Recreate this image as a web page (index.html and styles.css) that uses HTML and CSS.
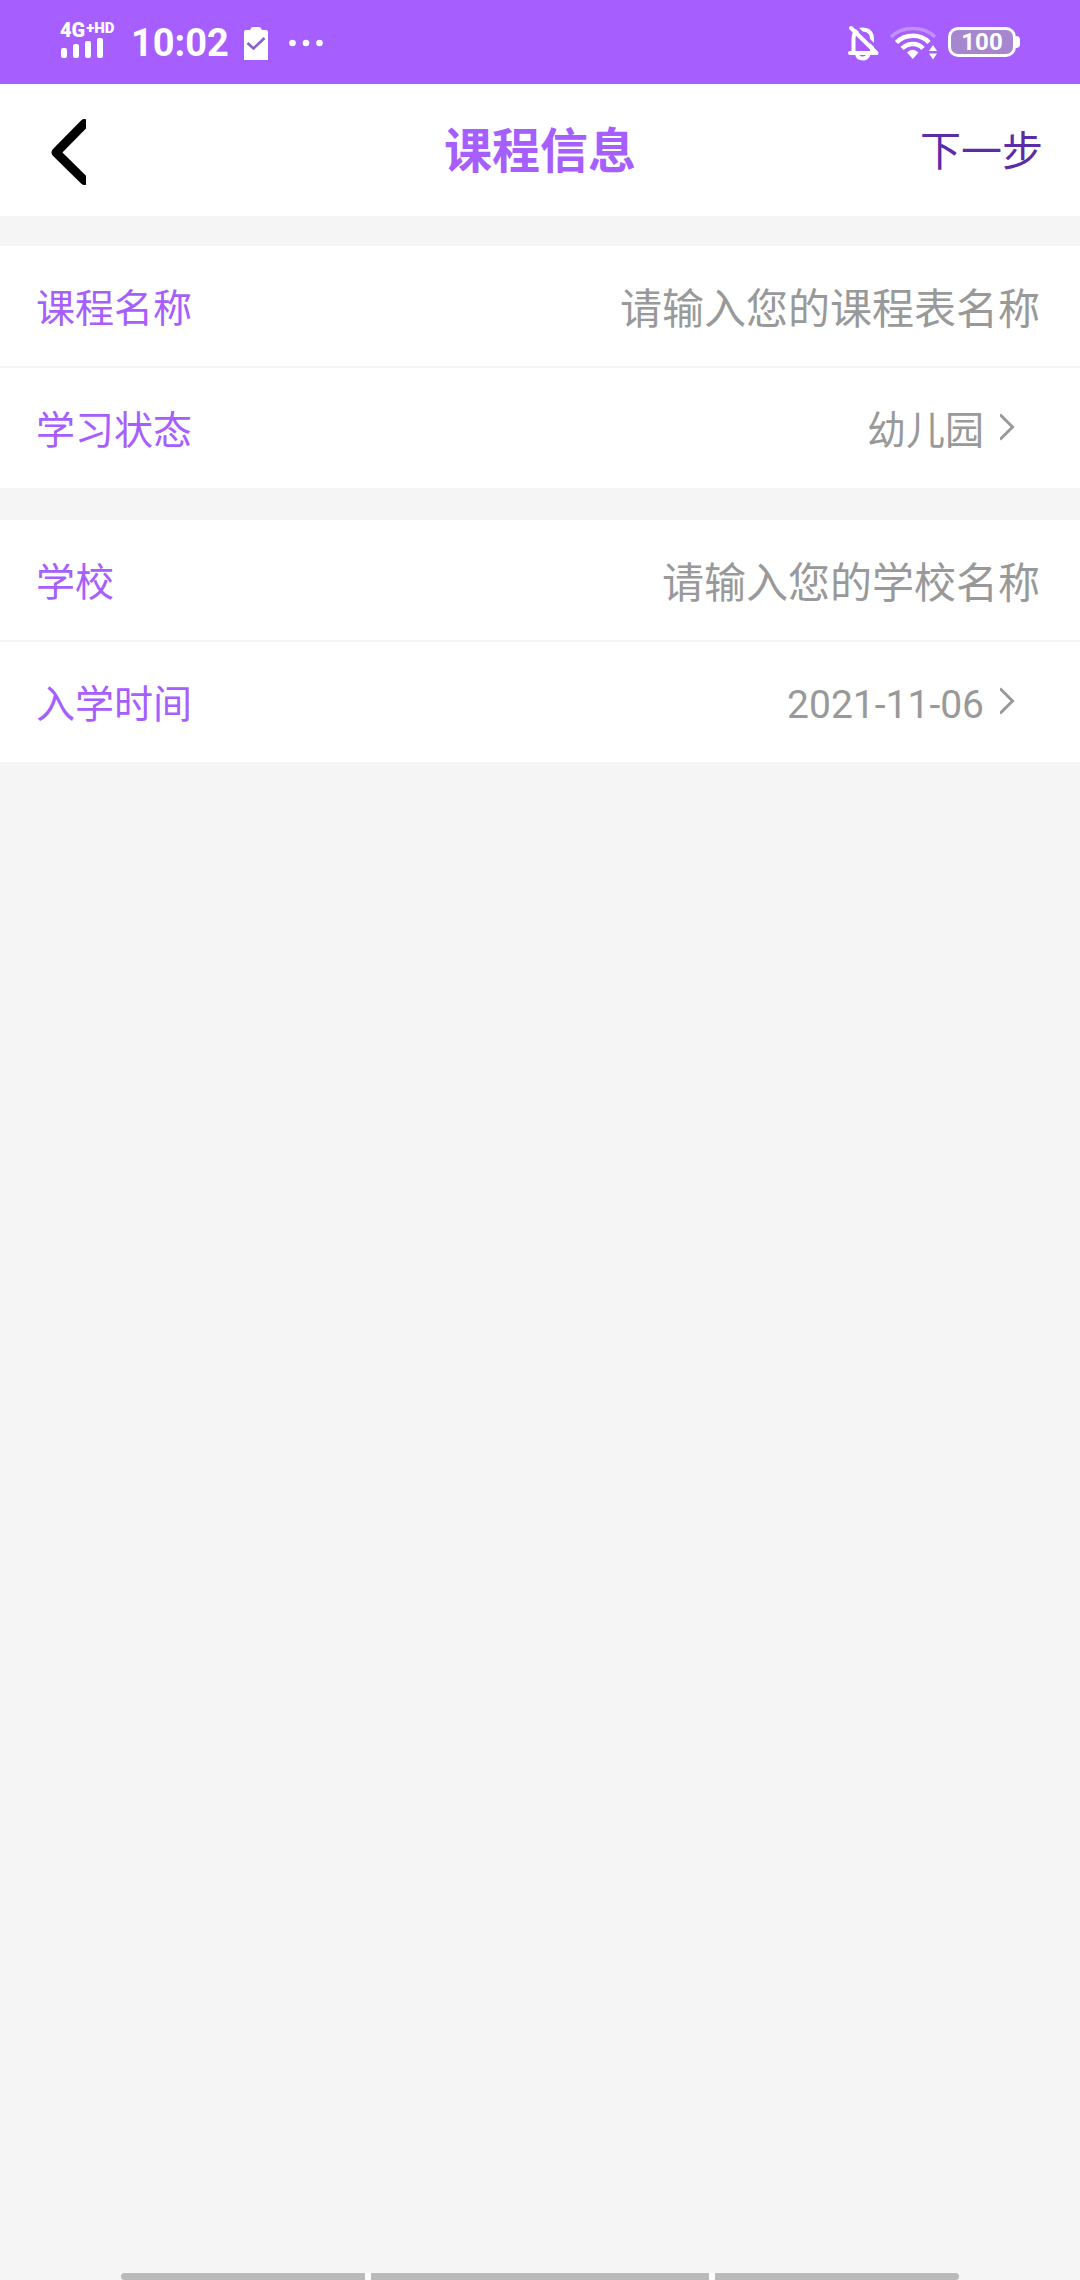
FILE: index.html
```html
<!DOCTYPE html>
<html lang="zh-CN">
<head>
<meta charset="utf-8">
<meta name="viewport" content="width=device-width, initial-scale=1">
<title>课程信息</title>
<link rel="stylesheet" href="styles.css">
</head>
<body>
<div class="status-bar">
  <div class="status-group">
    <div class="signal">
      <div class="network"><span>4G</span><span class="network-small">+HD</span></div>
      <svg class="signal-bars" width="44" height="20" viewBox="0 0 44 20" aria-hidden="true">
        <rect x="0" y="10" width="6" height="10" rx="2"/>
        <rect x="12" y="6" width="6" height="14" rx="2"/>
        <rect x="24" y="3" width="6" height="17" rx="2"/>
        <rect x="36" y="0" width="6" height="20" rx="2"/>
      </svg>
    </div>
    <span class="clock">10:02</span>
    <svg class="clipboard" width="24" height="33" viewBox="0 0 24 33" aria-hidden="true">
      <path fill="#fff" d="M0 5Q0 3 2 3H6Q7 0 9 0H15Q17 0 18 3H22Q24 3 24 5V33H0Z"/>
      <path fill="none" stroke="#8a62c8" stroke-width="2.6" d="M3.5 16L9.5 21.5L20.5 11"/>
    </svg>
    <svg class="dots" width="34" height="8" viewBox="0 0 34 8" aria-hidden="true">
      <circle cx="3.5" cy="4" r="3.3"/><circle cx="17" cy="4" r="3.3"/><circle cx="30.5" cy="4" r="3.3"/>
    </svg>
  </div>
  <div class="status-group">
    <svg class="bell" width="32" height="36" viewBox="0 0 32 36" aria-hidden="true">
      <g fill="none" stroke="#fff" stroke-width="4" stroke-linecap="round" stroke-linejoin="round">
        <path d="M2 28H28M5.5 27V14C5.5 7.5 9 4.5 14.5 4.5C20 4.5 24 7.5 24 14V27M9 29C10 35 19 35 20.5 29"/>
        <path stroke="#a65eff" stroke-width="3" d="M6 0L31 25"/>
        <path d="M3 3L28.5 28"/>
      </g>
    </svg>
    <svg class="wifi" width="48" height="36" viewBox="0 0 48 36" aria-hidden="true">
      <g fill="none" stroke="#fff" stroke-width="4.5">
        <path stroke="#c28fff" stroke-width="3.5" d="M1 12C12 .5 34 .5 45 12"/>
        <path d="M6.5 17.5C15 8.5 31 8.5 39 17.5"/>
        <path d="M12 23.5C18 17.5 28 17.5 33 23.5"/>
      </g>
      <path fill="#fff" d="M17 27.5Q22.5 22 28.5 27.5L22.8 34ZM39 26L43 20L47 26ZM39 28.5H47L43 34.5Z"/>
    </svg>
    <div class="battery">100</div>
  </div>
</div>

<header class="app-bar">
  <button class="back" type="button" aria-label="返回">
    <svg width="35" height="68" viewBox="0 0 35 68" aria-hidden="true">
      <path fill="none" stroke="#000" stroke-width="9" stroke-linecap="round" stroke-linejoin="round" d="M33.5 5.500L5 34.500L33.5 62.500"/>
    </svg>
  </button>
  <h1 class="title">课程信息</h1>
  <button class="next" type="submit" form="course-form">下一步</button>
</header>

<form class="course-form" id="course-form">
  <div class="card">
    <div class="row">
      <label class="label" for="course-name">课程名称</label>
      <input class="field" id="course-name" type="text" placeholder="请输入您的课程表名称">
    </div>
    <div class="row row-picker">
      <label class="label" for="stage">学习状态</label>
      <select class="picker" id="stage">
        <option>幼儿园</option>
        <option>小学</option>
        <option>初中</option>
        <option>高中</option>
        <option>大学</option>
      </select>
      <svg class="chevron" width="15" height="30" viewBox="0 0 15 30" aria-hidden="true"><path d="M0 1.500L12.500 14L0 26.500"/></svg>
    </div>
  </div>
  <div class="card">
    <div class="row">
      <label class="label" for="school">学校</label>
      <input class="field" id="school" type="text" placeholder="请输入您的学校名称">
    </div>
    <div class="row row-picker">
      <label class="label" for="enrol-date">入学时间</label>
      <button class="picker" id="enrol-date" type="button">2021-11-06</button>
      <svg class="chevron" width="15" height="30" viewBox="0 0 15 30" aria-hidden="true"><path d="M0 1.500L12.500 14L0 26.500"/></svg>
    </div>
  </div>
</form>

<div class="gesture-bar"><span></span><span></span><span></span></div>
</body>
</html>
```

FILE: styles.css
```css
* {
  box-sizing: border-box;
}

body {
  margin: 0;
  min-height: 100vh;
  display: flex;
  flex-direction: column;
  background: #f5f5f5;
  font-family: Roboto, "Noto Sans CJK SC", sans-serif;
}

button,
input,
select {
  margin: 0;
  padding: 0;
  border: 0;
  background: none;
  font: inherit;
  color: inherit;
}

svg {
  display: block;
  flex: none;
}

.status-bar {
  display: flex;
  justify-content: space-between;
  height: 84px;
  padding: 2px 60px 0;
  background: #a65eff;
  color: #fff;
  font-weight: 700;
}

.status-group {
  display: flex;
  align-items: center;
}

.signal {
  width: 71px;
  padding-bottom: 8px;
}

.network {
  display: flex;
  align-items: flex-start;
  height: 18px;
  font-size: 20px;
  font-weight: 900;
  line-height: 20px;
}

.network-small {
  padding-left: 1px;
  font-size: 15px;
  line-height: 16px;
}

.signal-bars {
  margin-left: 1px;
  fill: #fff;
}

.clock {
  font-size: 38px;
  line-height: 80px;
}

.clipboard {
  margin-left: 15px;
}

.dots {
  margin-left: 21px;
  fill: #fff;
}

.wifi {
  margin-left: 10px;
}

.battery {
  position: relative;
  width: 68px;
  height: 30px;
  margin: 0 4px 2px 10px;
  border: 3px solid #fff;
  border-radius: 10px;
  background: #a586cf;
  font-size: 24px;
  line-height: 24px;
  text-align: center;
}

.battery::after {
  content: "";
  position: absolute;
  top: 6px;
  right: -7px;
  width: 4px;
  height: 12px;
  border-radius: 0 4px 4px 0;
  background: #fff;
}

.app-bar {
  display: grid;
  grid-template-columns: 1fr auto 1fr;
  align-items: center;
  height: 132px;
  padding: 4px 37px 0;
  background: #fff;
}

.back {
  justify-self: start;
  padding: 0 14px;
}

.title {
  margin: 0;
  font-size: 48px;
  font-weight: 700;
  line-height: 72px;
  color: #a65eff;
}

.next {
  justify-self: end;
  font-size: 41px;
  line-height: 60px;
  color: #5a2ca8;
}

.course-form {
  display: grid;
  gap: 32px;
  padding-top: 30px;
}

.card {
  background: #fff;
}

.row {
  display: flex;
  align-items: center;
  height: 120px;
  padding: 0 40px 0 36px;
  font-size: 39px;
  color: #999;
}

.row + .row {
  height: 122px;
  border-top: 2px solid #f5f5f5;
}

.row-picker {
  padding-right: 65px;
}

.label {
  flex: none;
  padding-top: 6px;
  line-height: 60px;
  color: #a65eff;
}

.field,
.picker {
  flex: 1;
  min-width: 0;
  height: 66px;
  padding-top: 6px;
  text-align: right;
}

.field {
  font-size: 42px;
}

.field::placeholder {
  color: #999;
}

.picker {
  appearance: none;
  padding-right: 16px;
}

.chevron path {
  fill: none;
  stroke: #999;
  stroke-width: 3;
}

.gesture-bar {
  display: grid;
  grid-template-columns: 244fr 338fr 244fr;
  gap: 6px;
  width: 78%;
  max-width: 838px;
  height: 7px;
  margin: auto auto 0;
  background: linear-gradient(#fff, #fff) center / 60% 100% no-repeat;
}

.gesture-bar span {
  background: #bababa;
}

.gesture-bar span:first-child {
  border-radius: 4px 0 0 4px;
}

.gesture-bar span:last-child {
  border-radius: 0 4px 4px 0;
}
```
